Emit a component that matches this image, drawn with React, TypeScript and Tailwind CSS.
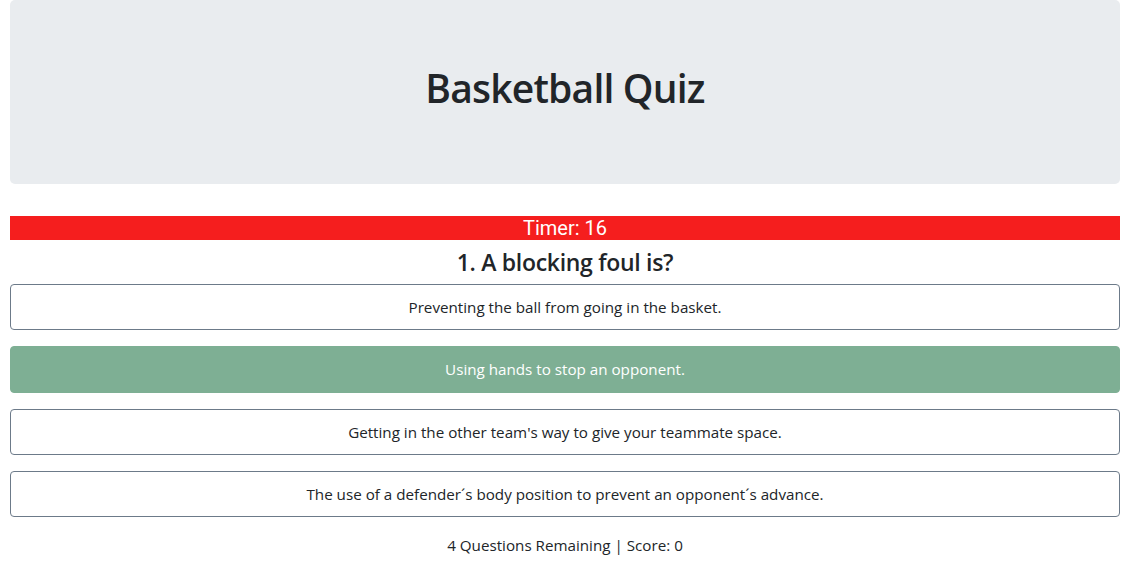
const answers = [
  { text: 'Preventing the ball from going in the basket.', picked: false },
  { text: 'Using hands to stop an opponent.', picked: true },
  { text: "Getting in the other team's way to give your teammate space.", picked: false },
  { text: 'The use of a defender\u00b4s body position to prevent an opponent\u00b4s advance.', picked: false },
]

export default function App() {
  return (
    <div className="min-h-screen bg-white px-[10px] text-[#212529] font-['Open_Sans',sans-serif]">
      {/* header */}
      <div className="h-[184px] bg-[#e9ecef] rounded-[5px] flex items-center justify-center pb-[9px]">
        <h1 className="text-[39px] font-semibold leading-none tracking-[-0.8px]">Basketball Quiz</h1>
      </div>

      {/* timer */}
      <div className="mt-[32px] h-[24px] bg-[#f51e1e] text-white text-center text-[20px] leading-[24px] font-['Roboto',sans-serif]">
        Timer: 16
      </div>

      <h4 className="text-center text-[23px] font-semibold leading-[44px] tracking-[-0.3px]">1. A blocking foul is?</h4>

      <div className="flex flex-col gap-[16px]">
        {answers.map((a) => (
          <button
            key={a.text}
            className={
              a.picked
                ? 'w-full h-[47px] rounded-[4px] bg-[#7eaf94] text-white text-[15.2px] border border-[#7eaf94]'
                : 'w-full h-[46px] rounded-[4px] bg-white text-[#212529] text-[15.2px] border border-[#6c7a89]'
            }
          >
            {a.text}
          </button>
        ))}
      </div>

      <p className="mt-[16px] text-center text-[15.2px] leading-[24px]">4 Questions Remaining | Score: 0</p>
    </div>
  )
}
